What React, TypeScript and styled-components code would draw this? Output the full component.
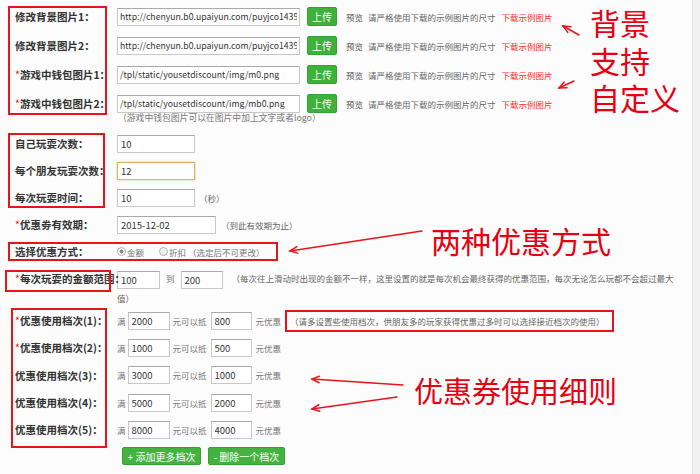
import styled, { createGlobalStyle, css } from "styled-components";

const GlobalStyle = createGlobalStyle`
  html, body { margin: 0; padding: 0; background: #f4f4f4; }
  body { font-family: "Noto Sans CJK SC", "Noto Sans", sans-serif; }
`;

const RED = "#e8141b";
const FONT = `"Noto Sans CJK SC", "Noto Sans", sans-serif`;

type Box = { top: number; left: number; width: number; bottom: number };

// red annotation frame drawn over a group of rows
const redBox = (box?: Box) =>
	box &&
	css`
		position: relative;
		&::after {
			content: "";
			position: absolute;
			top: ${box.top}px;
			left: ${box.left}px;
			width: ${box.width}px;
			bottom: ${box.bottom}px;
			border: 2px solid ${RED};
			box-sizing: border-box;
			pointer-events: none;
		}
	`;

const Page = styled.div`
	position: relative;
	width: 700px;
	height: 474px;
	overflow: hidden;
	display: flex;
	background: #fcfcfc;
`;

const Main = styled.main`
	flex: 1;
	padding: 2px 0 0 4px;
	display: flex;
	flex-direction: column;
`;

const Gutter = styled.div`
	width: 7px;
	background: #f0f0f0;
	border-left: 1px solid #e3e3e3;
`;

const Section = styled.div<{ $box?: Box; $mt?: number }>`
	display: flex;
	flex-direction: column;
	margin-top: ${({ $mt }) => $mt ?? 0}px;
	${({ $box }) => redBox($box)}
`;

const Row = styled.div<{ $h: number; $top?: boolean }>`
	display: flex;
	align-items: ${({ $top }) => ($top ? "flex-start" : "center")};
	height: ${({ $h }) => $h}px;
`;

const Label = styled.div<{ $box?: Box; $lh?: number }>`
	width: 113px;
	flex: none;
	box-sizing: border-box;
	padding-left: 11px;
	font-size: 10.5px;
	font-weight: 700;
	color: #333;
	white-space: nowrap;
	${({ $lh }) => $lh && `line-height: ${$lh}px;`}
	${({ $box }) => redBox($box)}
`;

const Star = styled.span`
	color: ${RED};
	font-weight: 400;
`;

const Field = styled.div`
	display: flex;
	align-items: center;
	font-size: 8.5px;
	color: #666;
	white-space: nowrap;
`;

const FlowField = styled.div`
	flex: 1;
	font-size: 8.5px;
	line-height: 19px;
	color: #666;

	input {
		vertical-align: middle;
	}
`;

const TextInput = styled.input<{ $w: number; $focus?: boolean }>`
	box-sizing: border-box;
	width: ${({ $w }) => $w}px;
	height: 18px;
	margin: 0;
	padding: 0 3px;
	border: 1px solid #c8c8c8;
	border-top-color: #a9a9a9;
	background: #fff;
	font: 9.5px ${FONT};
	color: #333;
	outline: none;
	${({ $focus }) =>
		$focus &&
		css`
			border-color: #dbb461;
			box-shadow: 0 0 2px rgba(219, 180, 97, 0.7);
		`}
`;

const UrlInput = styled(TextInput)`
	font-size: 8.7px;
	padding: 0 2px;
`;

const Upload = styled.button`
	margin-left: 7px;
	width: 30px;
	height: 19px;
	padding: 0;
	border: 1px solid #34a234;
	border-radius: 2px;
	background: #3eb13b;
	color: #fff;
	font: 10px ${FONT};
`;

const Note = styled.span<{ $ml?: number; $color?: string }>`
	margin-left: ${({ $ml }) => $ml ?? 0}px;
	color: ${({ $color }) => $color ?? "#666"};
`;

const Hint = styled.div`
	margin: -6px 0 0 114px;
	height: 12px;
	line-height: 12px;
	font-size: 8.8px;
	color: #777;
`;

const Radio = styled.span<{ $on?: boolean; $ml?: number }>`
	display: inline-flex;
	align-items: center;
	gap: 1px;
	margin-left: ${({ $ml }) => $ml ?? 0}px;
	color: #777;

	&::before {
		content: "";
		width: 7px;
		height: 7px;
		border-radius: 50%;
		border: 1px solid #b0b0b0;
		background: ${({ $on }) =>
			$on ? "radial-gradient(circle, #8a8a8a 0 1.7px, #fff 2.3px)" : "#f1f1f1"};
	}
`;

const HintBox = styled.span`
	margin-left: 4px;
	width: 329px;
	height: 22px;
	box-sizing: border-box;
	display: flex;
	align-items: center;
	padding-left: 3px;
	border: 2px solid ${RED};
	color: #666;
`;

const Buttons = styled.div`
	display: flex;
	gap: 7px;
	margin: 4px 0 0 118px;
`;

const GreenButton = styled.button<{ $w: number }>`
	width: ${({ $w }) => $w}px;
	height: 18px;
	padding: 0;
	border: 1px solid #34a234;
	border-radius: 2px;
	background: #43b23f;
	color: #fff;
	font: 10px ${FONT};
`;

const Callout = styled.div<{ $x: number; $y: number; $size: number; $lh?: number }>`
	position: absolute;
	left: ${({ $x }) => $x}px;
	top: ${({ $y }) => $y}px;
	font-size: ${({ $size }) => $size}px;
	line-height: ${({ $lh }) => ($lh ? `${$lh}px` : 1.25)};
	color: #e60012;
	white-space: nowrap;
	pointer-events: none;
`;

const Overlay = styled.svg`
	position: absolute;
	left: 0;
	top: 0;
	pointer-events: none;
`;

const imageRows = [
	{ label: "修改背景图片1：", star: false, value: "http://chenyun.b0.upaiyun.com/puyjco1439956" },
	{ label: "修改背景图片2：", star: false, value: "http://chenyun.b0.upaiyun.com/puyjco1439956" },
	{ label: "游戏中钱包图片1：", star: true, value: "/tpl/static/yousetdiscount/img/m0.png" },
	{ label: "游戏中钱包图片2：", star: true, value: "/tpl/static/yousetdiscount/img/mb0.png" },
];

const tiers = [
	{ label: "优惠使用档次(1)：", star: true, min: "2000", off: "800" },
	{ label: "优惠使用档次(2)：", star: true, min: "1000", off: "500" },
	{ label: "优惠使用档次(3)：", star: false, min: "3000", off: "1000" },
	{ label: "优惠使用档次(4)：", star: false, min: "5000", off: "2000" },
	{ label: "优惠使用档次(5)：", star: false, min: "8000", off: "4000" },
];

const arrows: [number, number, number, number][] = [
	[579, 35, 563, 26],
	[574, 81, 559, 88],
	[422, 231, 290, 251],
	[403, 385, 312, 379],
	[397, 397, 312, 409],
];

function Arrow({ line }: { line: [number, number, number, number] }) {
	const [x1, y1, x2, y2] = line;
	const a = Math.atan2(y1 - y2, x1 - x2);
	const len = 8;
	const s = 0.42;
	const h1 = [x2 + len * Math.cos(a + s), y2 + len * Math.sin(a + s)];
	const h2 = [x2 + len * Math.cos(a - s), y2 + len * Math.sin(a - s)];
	return (
		<g stroke={RED} strokeWidth={1.5} fill="none" strokeLinecap="round">
			<line x1={x1} y1={y1} x2={x2} y2={y2} />
			<polyline points={`${h1[0]},${h1[1]} ${x2},${y2} ${h2[0]},${h2[1]}`} />
		</g>
	);
}

export default function App() {
	return (
		<>
			<GlobalStyle />
			<Page>
				<Main>
					<Section $box={{ top: 4, left: 4, width: 99, bottom: 3 }}>
						{imageRows.map((r) => (
							<Row $h={29} key={r.label}>
								<Label>
									{r.star && <Star>*</Star>}
									{r.label}
								</Label>
								<Field>
									<UrlInput $w={183} defaultValue={r.value} readOnly />
									<Upload>上传</Upload>
									<Note $ml={9} $color="#555">预览</Note>
									<Note $ml={5}>请严格使用下载的示例图片的尺寸</Note>
									<Note $ml={6} $color="#ff2a2a">下载示例图片</Note>
								</Field>
							</Row>
						))}
					</Section>
					<Hint>（游戏中钱包图片可以在图片中加上文字或者logo）</Hint>

					<Section $mt={6} $box={{ top: 3, left: 4, width: 97, bottom: 3 }}>
						<Row $h={27}>
							<Label>自己玩耍次数：</Label>
							<Field>
								<TextInput $w={78} defaultValue="10" readOnly />
							</Field>
						</Row>
						<Row $h={27}>
							<Label>每个朋友玩耍次数：</Label>
							<Field>
								<TextInput $w={78} $focus defaultValue="12" readOnly />
							</Field>
						</Row>
						<Row $h={27}>
							<Label>每次玩耍时间：</Label>
							<Field>
								<TextInput $w={78} defaultValue="10" readOnly />
								<Note $ml={4}>（秒）</Note>
							</Field>
						</Row>
					</Section>

					<Row $h={27}>
						<Label>
							<Star>*</Star>优惠劵有效期：
						</Label>
						<Field>
							<TextInput $w={99} defaultValue="2015-12-02" readOnly />
							<Note $ml={5}>（到此有效期为止）</Note>
						</Field>
					</Row>

					<Section $box={{ top: 3.5, left: 4, width: 270, bottom: 4 }}>
						<Row $h={27}>
							<Label>选择优惠方式：</Label>
							<Field>
								<Radio $on>金额</Radio>
								<Radio $ml={15}>折扣</Radio>
								<Note $ml={2} $color="#777">（选定后不可更改）</Note>
							</Field>
						</Row>
					</Section>

					<Section $mt={4}>
						<Row $h={38} $top>
							<Label $lh={19} $box={{ top: 0.5, left: 1, width: 106, bottom: -3.5 }}>
								<Star>*</Star>每次玩耍的金额范围：
							</Label>
							<FlowField>
								<TextInput $w={43} defaultValue="100" readOnly />
								<Note $ml={6} $color="#777">到</Note>
								<Note $ml={6} />
								<TextInput $w={42} defaultValue="200" readOnly />
								<Note $ml={9}>
									（每次往上滑动时出现的金额不一样，这里设置的就是每次机会最终获得的优惠范围，每次无论怎么玩都不会超过最大
									<br />
									值）
								</Note>
							</FlowField>
						</Row>
					</Section>

					<Section $box={{ top: 0.5, left: 7, width: 96, bottom: -4.5 }}>
						{tiers.map((t, i) => (
							<Row $h={27.3} key={t.label}>
								<Label>
									{t.star && <Star>*</Star>}
									{t.label}
								</Label>
								<Field>
									<Note $color="#777">满</Note>
									<Note $ml={2} />
									<TextInput $w={42} defaultValue={t.min} readOnly />
									<Note $ml={3} $color="#777">元可以抵</Note>
									<Note $ml={4} />
									<TextInput $w={41} defaultValue={t.off} readOnly />
									<Note $ml={4} $color="#777">元优惠</Note>
									{i === 0 && (
										<HintBox>（请多设置些使用档次，供朋友多的玩家获得优惠过多时可以选择接近档次的使用）</HintBox>
									)}
								</Field>
							</Row>
						))}
					</Section>

					<Buttons>
						<GreenButton $w={79}>+ 添加更多档次</GreenButton>
						<GreenButton $w={77}>- 删除一个档次</GreenButton>
					</Buttons>
				</Main>
				<Gutter />

				<Callout $x={590} $y={4} $size={30} $lh={37.5}>
					背景
					<br />
					支持
					<br />
					自定义
				</Callout>
				<Callout $x={431} $y={222} $size={30}>
					两种优惠方式
				</Callout>
				<Callout $x={414} $y={372} $size={29}>
					优惠券使用细则
				</Callout>

				<Overlay width={700} height={474} viewBox="0 0 700 474">
					{arrows.map((l, i) => (
						<Arrow key={i} line={l} />
					))}
				</Overlay>
			</Page>
		</>
	);
}
